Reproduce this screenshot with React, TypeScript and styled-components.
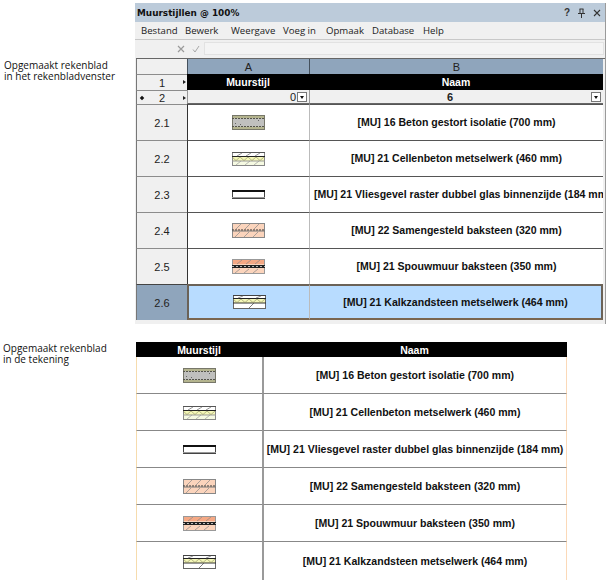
import React from 'react'
import styled, { createGlobalStyle } from 'styled-components'

type Kind = 'beton' | 'cellen' | 'vlies' | 'samen' | 'spouw' | 'kalk'

interface Row {
    id: string
    kind: Kind
    name: string
}

const rows: Row[] = [
    { id: '2.1', kind: 'beton', name: '[MU] 16 Beton gestort isolatie (700 mm)' },
    { id: '2.2', kind: 'cellen', name: '[MU] 21 Cellenbeton metselwerk (460 mm)' },
    { id: '2.3', kind: 'vlies', name: '[MU] 21 Vliesgevel raster dubbel glas binnenzijde (184 mm)' },
    { id: '2.4', kind: 'samen', name: '[MU] 22 Samengesteld baksteen (320 mm)' },
    { id: '2.5', kind: 'spouw', name: '[MU] 21 Spouwmuur baksteen (350 mm)' },
    { id: '2.6', kind: 'kalk', name: '[MU] 21 Kalkzandsteen metselwerk (464 mm)' },
]

const GlobalStyle = createGlobalStyle`
    html, body { margin: 0; padding: 0; background: #fff; }
    body { width: 609px; height: 580px; overflow: hidden; font-family: "Liberation Sans", Arial, sans-serif; }
`

const Page = styled.div`
    display: flex;
    flex-direction: column;
    width: 609px;
    height: 580px;
    overflow: hidden;
`

const Section = styled.section<{ $top: number }>`
    display: grid;
    grid-template-columns: 135px 1fr;
    padding-top: ${p => p.$top}px;
`

const Caption = styled.div<{ $top: number; $left: number }>`
    padding: ${p => p.$top}px 0 0 ${p => p.$left}px;
    font-family: "Open Sans", "Noto Sans", sans-serif;
    font-size: 10px;
    line-height: 10.5px;
    color: #111;
    white-space: nowrap;
`

const Window = styled.div`
    width: 471px;
    height: 321px;
    background: #f0f0f0;
    box-sizing: border-box;
    border-right: 1px solid #9a9a9a;
`

const TitleBar = styled.div`
    display: flex;
    align-items: center;
    justify-content: space-between;
    height: 19px;
    padding: 0 4px 0 2px;
    background: #bccbda;
    font-family: "DejaVu Sans", sans-serif;
    font-weight: 700;
    font-size: 8.9px;
    color: #111;
`

const WindowControls = styled.div`
    display: flex;
    align-items: center;
    gap: 7px;
    font-family: "Liberation Sans", Arial, sans-serif;
    font-size: 10px;
    font-weight: 700;
    color: #333;
`

const MenuBar = styled.div`
    display: flex;
    height: 18px;
    align-items: center;
    padding-left: 6px;
    background: #f0f0f0;
    border-bottom: 1px solid #c8c8c8;
    box-sizing: border-box;
    font-family: "Open Sans", "Noto Sans", sans-serif;
    font-size: 9.6px;
    color: #222;
`

const MenuItem = styled.span<{ $width: number }>`
    width: ${p => p.$width}px;
`

const FormulaBar = styled.div`
    display: flex;
    align-items: center;
    height: 17px;
    padding-left: 42px;
    box-sizing: border-box;
    color: #9a9a9a;
`

const FormulaIcons = styled.div`
    display: flex;
    align-items: center;
    gap: 7px;
    margin-right: 4px;
`

const FormulaInput = styled.div`
    flex: 1;
    height: 13px;
    margin-right: 1px;
    background: #f4f4f4;
    border: 1px solid #e2e2e2;
    box-sizing: border-box;
`

const Sheet = styled.div`
    display: grid;
    grid-template-columns: 51px 122px 294px;
    margin: 1px 0 0 1px;
    font-family: "Liberation Sans", Arial, sans-serif;
    border-top: 1px solid #666;
`

const ColHead = styled.div`
    display: flex;
    align-items: center;
    justify-content: center;
    height: 15px;
    background: #8fa5bc;
    border-left: 1px solid #44505c;
    box-sizing: border-box;
    font-size: 11px;
    color: #222;
`

const Corner = styled.div`
    height: 15px;
    background: #f0f0f0;
    border-left: 1px solid #777;
    box-sizing: border-box;
`

const RowHead = styled.div<{ $height: number; $active?: boolean }>`
    position: relative;
    display: flex;
    align-items: center;
    justify-content: center;
    height: ${p => p.$height}px;
    box-sizing: border-box;
    background: ${p => (p.$active ? '#8fa5bc' : '#f0f0f0')};
    border-left: 1px solid #777;
    border-top: 1px solid ${p => (p.$active ? '#444' : '#8c8c8c')};
    font-size: 11px;
    color: #222;
`

const Arrow = styled.span`
    position: absolute;
    right: 1px;
    top: 5px;
    width: 0;
    height: 0;
    border-left: 3px solid #222;
    border-top: 2.5px solid transparent;
    border-bottom: 2.5px solid transparent;
`

const Dot = styled.span`
    position: absolute;
    left: 3px;
    top: 5px;
    width: 4px;
    height: 4px;
    background: #111;
    transform: rotate(45deg) scale(0.8);
`

const HeadCell = styled.div`
    display: flex;
    align-items: center;
    justify-content: center;
    height: 16px;
    background: #000;
    color: #fff;
    font-weight: 700;
    font-size: 10.5px;
`

const FilterCell = styled.div<{ $align: 'center' | 'flex-end' }>`
    position: relative;
    display: flex;
    align-items: center;
    justify-content: ${p => p.$align};
    height: 14px;
    padding-right: 13px;
    box-sizing: border-box;
    background: #f0f0f0;
    border-left: 1px solid #999;
    border-bottom: 1px solid #666;
    font-size: 11px;
    font-weight: ${p => (p.$align === 'center' ? 700 : 400)};
    color: #222;
`

const DropButton = styled.span`
    position: absolute;
    right: 2px;
    top: 2px;
    width: 10px;
    height: 10px;
    box-sizing: border-box;
    background: #fff;
    border: 1px solid #777;
    &::after {
        content: '';
        position: absolute;
        left: 2px;
        top: 3px;
        border-top: 3px solid #111;
        border-left: 2px solid transparent;
        border-right: 2px solid transparent;
    }
`

const Cell = styled.div<{ $active?: boolean; $first?: boolean; $last?: boolean }>`
    display: flex;
    align-items: center;
    justify-content: center;
    height: 36px;
    padding-bottom: 1px;
    box-sizing: border-box;
    overflow: hidden;
    white-space: nowrap;
    background: ${p => (p.$active ? '#b8dcff' : '#fff')};
    border-top: ${p => (p.$active ? '2px solid #6b6257' : '1px solid #555')};
    border-bottom: ${p => (p.$active ? '2px solid #7a6650' : '0')};
    border-left: ${p => (p.$first && p.$active ? '2px solid #6b6257' : p.$first ? '1px solid #333' : '1px solid #bbb')};
    border-right: ${p => (p.$last && p.$active ? '2px solid #6b6257' : '0')};
    font-weight: 700;
    font-size: 10.55px;
    color: #111;
`

const Clipped = styled.span`
    padding-left: 4px;
    width: 100%;
    box-sizing: border-box;
`

const DrawingTable = styled.div`
    display: grid;
    grid-template-columns: 126px 305px;
    width: 431px;
    margin-left: 1px;
    font-family: "Liberation Sans", Arial, sans-serif;
`

const DrawingHead = styled.div`
    display: flex;
    align-items: center;
    justify-content: center;
    height: 15px;
    background: #000;
    color: #fff;
    font-weight: 700;
    font-size: 10.5px;
`

const DrawingCell = styled.div<{ $side: 'left' | 'right'; $end?: boolean }>`
    display: flex;
    align-items: center;
    justify-content: center;
    height: ${p => (p.$end ? 38 : 37)}px;
    box-sizing: border-box;
    white-space: nowrap;
    border-bottom: ${p => (p.$end ? '0' : '1px solid #888')};
    border-left: ${p => (p.$side === 'left' ? '1px solid #f6dcae' : '2px solid #9a9a9a')};
    border-right: ${p => (p.$side === 'right' ? '1px solid #fbd9b8' : '0')};
    font-weight: 700;
    font-size: 10.55px;
    color: #111;
`

const hatch = (xs: number[], y1: number, y2: number, c = '#777') =>
    xs.map(x => <line key={x + '-' + y1} x1={x} y1={y2} x2={x + 5} y2={y1} stroke={c} strokeWidth="0.7" />)

const zigzag = (y1: number, y2: number) => {
    const pts: string[] = []
    for (let x = 0; x <= 33; x += 4) pts.push(`${x},${(x / 4) % 2 === 0 ? y1 : y2}`)
    return <polyline points={pts.join(' ')} fill="none" stroke="#8a8a60" strokeWidth="0.6" />
}

const Swatch = ({ kind }: { kind: Kind }) => (
    <svg width="33" height="15" viewBox="0 0 33 15">
        {kind === 'beton' && (
            <g>
                <rect x="0.5" y="0.5" width="32" height="14" fill="#c0c0be" stroke="#77776a" />
                <rect x="1" y="1" width="31" height="2" fill="#b4b48e" />
                <rect x="1" y="12" width="31" height="2" fill="#b4b48e" />
                <line x1="0" y1="3.5" x2="33" y2="3.5" stroke="#55554a" strokeDasharray="2 1" />
                <line x1="0" y1="11.5" x2="33" y2="11.5" stroke="#55554a" strokeDasharray="2 1" />
                <rect x="3" y="8" width="1" height="1" fill="#666" />
                <rect x="8" y="9" width="1" height="1" fill="#666" />
                <rect x="26" y="5" width="1" height="1" fill="#666" />
            </g>
        )}
        {kind === 'cellen' && (
            <g>
                <rect x="0.5" y="1.5" width="32" height="13" fill="#f6fae2" stroke="#888" />
                <rect x="1" y="2" width="31" height="3" fill="#fff" />
                <rect x="1" y="6" width="31" height="4" fill="#f5f8b8" />
                <line x1="0" y1="1.5" x2="33" y2="1.5" stroke="#555" />
                <line x1="0" y1="5.5" x2="33" y2="5.5" stroke="#222" />
                <line x1="0" y1="10" x2="33" y2="10" stroke="#999" />
                {zigzag(6, 9.5)}
                {hatch([5, 14, 23], 2, 5, '#666')}
                {hatch([4, 13, 22], 10, 14, '#999')}
            </g>
        )}
        {kind === 'vlies' && (
            <g>
                <rect x="0.5" y="3.5" width="32" height="8" fill="#fff" stroke="#444" />
                <rect x="0" y="3" width="33" height="2" fill="#111" />
                <line x1="0" y1="10.5" x2="33" y2="10.5" stroke="#999" />
            </g>
        )}
        {kind === 'samen' && (
            <g>
                <rect x="0.5" y="0.5" width="32" height="14" fill="#fbd4bc" stroke="#888" />
                {hatch([4, 13, 22], 1, 6, '#888')}
                {hatch([3, 12, 21], 9, 14, '#888')}
                <line x1="0" y1="7" x2="33" y2="7" stroke="#333" strokeDasharray="2 1" />
                <line x1="0" y1="8" x2="33" y2="8" stroke="#777" />
            </g>
        )}
        {kind === 'spouw' && (
            <g>
                <rect x="0.5" y="0.5" width="32" height="14" fill="#fbd4bc" stroke="#999" />
                <rect x="1" y="1" width="31" height="4" fill="#f5a884" />
                {hatch([5, 14, 23], 1, 5, '#888')}
                {hatch([3, 12, 21], 10, 14, '#888')}
                <rect x="0" y="6" width="33" height="3" fill="#222" />
                <line x1="0" y1="7.5" x2="33" y2="7.5" stroke="#bbb" strokeDasharray="2 2" />
            </g>
        )}
        {kind === 'kalk' && (
            <g>
                <rect x="0.5" y="1.5" width="32" height="13" fill="#fff" stroke="#666" />
                <rect x="1" y="5" width="31" height="4" fill="#f5f8b8" />
                <line x1="0" y1="1.5" x2="33" y2="1.5" stroke="#444" />
                <line x1="0" y1="4.5" x2="33" y2="4.5" stroke="#222" />
                <line x1="0" y1="9" x2="33" y2="9" stroke="#333" />
                {zigzag(5, 8.5)}
                {hatch([5, 23], 2, 4, '#666')}
                {hatch([16], 9, 14, '#444')}
            </g>
        )}
    </svg>
)

const PinIcon = () => (
    <svg width="9" height="10" viewBox="0 0 9 10">
        <path d="M2.5 1h4M3 1v4.5M6 1v4.5M1 5.5h7M4.5 5.5V10" fill="none" stroke="#333" />
    </svg>
)

const CloseIcon = () => (
    <svg width="8" height="8" viewBox="0 0 8 8">
        <path d="M1 1l6 6M7 1l-6 6" fill="none" stroke="#333" strokeWidth="1.1" />
    </svg>
)

const CancelIcon = () => (
    <svg width="8" height="8" viewBox="0 0 8 8">
        <path d="M1 1l6 6M7 1l-6 6" fill="none" stroke="#9a9a9a" strokeWidth="1.2" />
    </svg>
)

const CheckIcon = () => (
    <svg width="8" height="8" viewBox="0 0 8 8">
        <path d="M1 4.5l2 2.5 4-6" fill="none" stroke="#a8a8a8" strokeWidth="1" />
    </svg>
)

const menu: [string, number][] = [
    ['Bestand', 44], ['Bewerk', 46], ['Weergave', 52], ['Voeg in', 43],
    ['Opmaak', 46], ['Database', 51], ['Help', 30],
]

export default function App() {
    return (
        <Page>
            <GlobalStyle />
            <Section $top={3}>
                <Caption $top={57} $left={4}>
                    Opgemaakt rekenblad<br />in het rekenbladvenster
                </Caption>
                <Window>
                    <TitleBar>
                        <span>Muurstijllen @ 100%</span>
                        <WindowControls><span>?</span><PinIcon /><CloseIcon /></WindowControls>
                    </TitleBar>
                    <MenuBar>
                        {menu.map(([label, width]) => <MenuItem key={label} $width={width}>{label}</MenuItem>)}
                    </MenuBar>
                    <FormulaBar>
                        <FormulaIcons><CancelIcon /><CheckIcon /></FormulaIcons>
                        <FormulaInput />
                    </FormulaBar>
                    <Sheet>
                        <Corner />
                        <ColHead>A</ColHead>
                        <ColHead>B</ColHead>
                        <RowHead $height={16}>1<Arrow /></RowHead>
                        <HeadCell>Muurstijl</HeadCell>
                        <HeadCell>Naam</HeadCell>
                        <RowHead $height={14}><Dot />2<Arrow /></RowHead>
                        <FilterCell $align="flex-end">0<DropButton /></FilterCell>
                        <FilterCell $align="center">6<DropButton /></FilterCell>
                        {rows.map((row, i) => {
                            const active = i === rows.length - 1
                            return (
                                <React.Fragment key={row.id}>
                                    <RowHead $height={36} $active={active}>{row.id}</RowHead>
                                    <Cell $first $active={active}><Swatch kind={row.kind} /></Cell>
                                    <Cell $last $active={active}>
                                        {row.kind === 'vlies' ? <Clipped>{row.name}</Clipped> : row.name}
                                    </Cell>
                                </React.Fragment>
                            )
                        })}
                    </Sheet>
                </Window>
            </Section>
            <Section $top={18}>
                <Caption $top={1} $left={3}>
                    Opgemaakt rekenblad<br />in de tekening
                </Caption>
                <DrawingTable>
                    <DrawingHead>Muurstijl</DrawingHead>
                    <DrawingHead>Naam</DrawingHead>
                    {rows.map((row, i) => {
                        const end = i === rows.length - 1
                        return (
                            <React.Fragment key={row.id}>
                                <DrawingCell $side="left" $end={end}><Swatch kind={row.kind} /></DrawingCell>
                                <DrawingCell $side="right" $end={end}>{row.name}</DrawingCell>
                            </React.Fragment>
                        )
                    })}
                </DrawingTable>
            </Section>
        </Page>
    )
}
